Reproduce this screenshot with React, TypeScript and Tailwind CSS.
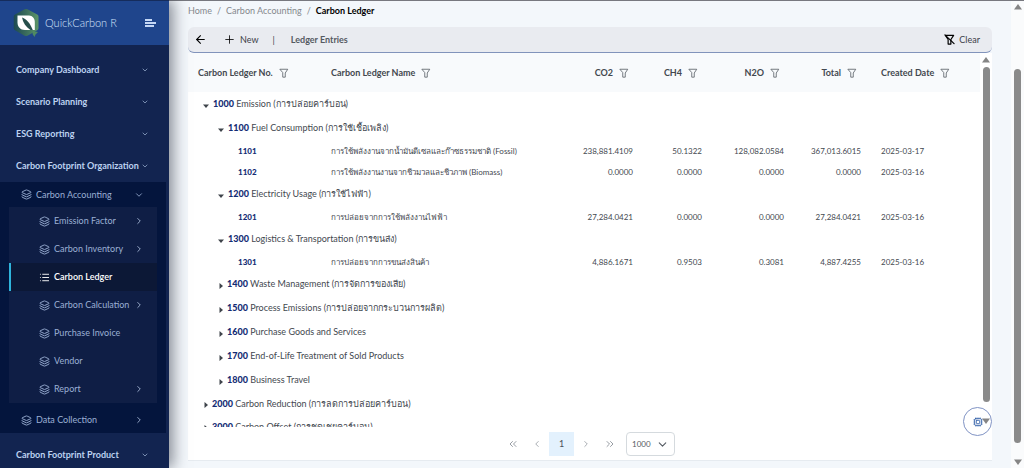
import { useState } from "react";
import { ChevronDown, ChevronRight, Cpu, Layers, List, Plus, ArrowLeft, ChevronLeft, ChevronsLeft, ChevronsRight } from "lucide-react";

type SubItem = { label: string; arrow?: boolean; active?: boolean };

const topItems = ["Company Dashboard", "Scenario Planning", "ESG Reporting", "Carbon Footprint Organization"];

const subItems: SubItem[] = [
  { label: "Emission Factor", arrow: true },
  { label: "Carbon Inventory", arrow: true },
  { label: "Carbon Ledger", active: true },
  { label: "Carbon Calculation", arrow: true },
  { label: "Purchase Invoice" },
  { label: "Vendor" },
  { label: "Report", arrow: true },
];

type Row = {
  no: string;
  level: number;
  name: string;
  open?: boolean;
  values?: string[];
};

const rows: Row[] = [
  { no: "1000", level: 0, name: "Emission (การปล่อยคาร์บอน)", open: true },
  { no: "1100", level: 1, name: "Fuel Consumption (การใช้เชื้อเพลิง)", open: true },
  {
    no: "1101",
    level: 2,
    name: "การใช้พลังงานจากน้ำมันดีเซลและก๊าซธรรมชาติ (Fossil)",
    values: ["238,881.4109", "50.1322", "128,082.0584", "367,013.6015", "2025-03-17"],
  },
  {
    no: "1102",
    level: 2,
    name: "การใช้พลังงานงานจากชีวมวลและชีวภาพ (Biomass)",
    values: ["0.0000", "0.0000", "0.0000", "0.0000", "2025-03-16"],
  },
  { no: "1200", level: 1, name: "Electricity Usage (การใช้ไฟฟ้า)", open: true },
  {
    no: "1201",
    level: 2,
    name: "การปล่อยจากการใช้พลังงานไฟฟ้า",
    values: ["27,284.0421", "0.0000", "0.0000", "27,284.0421", "2025-03-16"],
  },
  { no: "1300", level: 1, name: "Logistics & Transportation (การขนส่ง)", open: true },
  {
    no: "1301",
    level: 2,
    name: "การปล่อยจากการขนส่งสินค้า",
    values: ["4,886.1671", "0.9503", "0.3081", "4,887.4255", "2025-03-16"],
  },
  { no: "1400", level: 1, name: "Waste Management (การจัดการของเสีย)" },
  { no: "1500", level: 1, name: "Process Emissions (การปล่อยจากกระบวนการผลิต)" },
  { no: "1600", level: 1, name: "Purchase Goods and Services" },
  { no: "1700", level: 1, name: "End-of-Life Treatment of Sold Products" },
  { no: "1800", level: 1, name: "Business Travel" },
  { no: "2000", level: 0, name: "Carbon Reduction (การลดการปล่อยคาร์บอน)" },
  { no: "3000", level: 0, name: "Carbon Offset (การชดเชยคาร์บอน)" },
];

const Logo = () => (
  <svg viewBox="0 0 28 30" className="h-[30px] w-7 shrink-0" aria-hidden="true">
    <defs>
      <linearGradient id="hex" x1="0" y1="0" x2="1" y2="0">
        <stop offset="0" stopColor="#1d4a52" />
        <stop offset="0.5" stopColor="#3a6c5c" />
        <stop offset="1" stopColor="#5d9668" />
      </linearGradient>
    </defs>
    <path
      d="M12.6 1.3a3 3 0 0 1 2.8 0l9.8 5.2a2.4 2.4 0 0 1 1.3 2.1v11.6a2.4 2.4 0 0 1-1.3 2.1l-9.8 5.4a3 3 0 0 1-2.8 0L3 22.3a2.4 2.4 0 0 1-1.3-2.1V8.6a2.4 2.4 0 0 1 1.3-2.1z"
      fill="url(#hex)"
    />
    <path d="M5.5 7.500h11.500c3.500 0 5.800 3 5.800 6.500v8h-10c-4.500 0-7.300-3.200-7.300-7.500z" fill="#fff" />
    <path d="M10 9.500c5 1.500 8 6 10.800 12.500h-2.300c-4.500-3-7.500-7-8.500-12.500z" fill="#264f4b" />
    <path d="M21 23l5 1-2.500 2.500-1 2.500-2-3z" fill="#4f8a62" />
  </svg>
);

const FilterIcon = ({ slash = false, className = "" }: { slash?: boolean; className?: string }) => (
  <svg
    viewBox="0 0 12 12"
    className={className}
    fill="none"
    stroke="currentColor"
    strokeWidth={slash ? 1.3 : 1}
    strokeLinejoin="round"
    strokeLinecap="round"
    aria-hidden="true"
  >
    <path d="M1.500 1.500h9L7.500 6v5h-3V6z" />
    {slash && <path d="M1 1l10 9.500" />}
  </svg>
);

const SidebarGroup = ({ label }: { label: string }) => (
  <button className="flex h-8 w-full items-center justify-between pl-4 pr-5 text-left font-bold text-[#bdd2f0]">
    {label}
    <ChevronDown className="size-2 text-[#a9bfe0]" />
  </button>
);

const Sidebar = () => (
  <aside className="relative z-10 flex w-[169px] shrink-0 flex-col bg-[#122450] text-[9px] shadow-[4px_0_14px_rgba(40,45,60,0.55)]">
    <div className="flex h-[45px] shrink-0 items-center border-t border-[#152c5c] bg-[#1f458c] pl-3 pr-3">
      <Logo />
      <span className="ml-[5px] text-[11px] font-light text-[#d5e3fa]">QuickCarbon R</span>
      <button className="ml-auto text-[#c5d8f6]" aria-label="Toggle menu">
        <svg viewBox="0 0 12 10" className="h-[10px] w-3" fill="currentColor">
          <rect x="0" y="1" width="7" height="2" />
          <rect x="0" y="4" width="11" height="2" />
          <rect x="0" y="7" width="9" height="2" />
        </svg>
      </button>
    </div>

    <nav className="pt-[9px]">
      {topItems.map((label) => (
        <SidebarGroup key={label} label={label} />
      ))}

      {/* Opened section */}
      <div className="mr-[3px] bg-[#04153d] text-[#9bb0d4]">
        <button className="flex h-[25px] w-full items-center pl-[21px] pr-[22px]">
          <Layers className="mr-1 size-[11px]" />
          Carbon Accounting
          <ChevronDown className="ml-auto size-[10px]" />
        </button>

        <ul className="ml-[9px] mr-[9px] bg-[#0f1e45]">
          {subItems.map((item) => (
            <li key={item.label}>
              <a
                href="#"
                className={
                  item.active
                    ? "flex h-7 items-center border-l-2 border-[#2fb4dc] bg-[#0c1836] pl-7 pr-3 font-semibold text-white"
                    : "flex h-7 items-center pl-[30px] pr-[13px]"
                }
              >
                {item.active ? (
                  <List className="mr-1 size-[11px]" />
                ) : (
                  <Layers className="mr-1 size-[11px]" />
                )}
                {item.label}
                {item.arrow && <ChevronRight className="ml-auto size-[10px] text-[#b1c2e0]" />}
              </a>
            </li>
          ))}
        </ul>

        <button className="mt-1 flex h-[26px] w-full items-center pl-[21px] pr-[22px]">
          <Layers className="mr-1 size-[11px]" />
          Data Collection
          <ChevronRight className="ml-auto size-[10px] text-[#b1c2e0]" />
        </button>
      </div>

      <div className="pt-[6px]">
        <SidebarGroup label="Carbon Footprint Product" />
      </div>
    </nav>
  </aside>
);

const Triangle = ({ down = false }: { down?: boolean }) => (
  <svg viewBox="0 0 8 6" className="h-[6px] w-2 shrink-0" fill="#858585" aria-hidden="true">
    <path d={down ? "M0 0.500h8L4 6z" : "M0 5.500h8L4 0z"} />
  </svg>
);

const HeadCell = ({ label, right = false }: { label: string; right?: boolean }) => (
  <th scope="col" className={right ? "pl-0 pr-[14px]" : "pl-[10px]"}>
    <span className={right ? "flex items-center justify-end gap-[6px]" : "flex items-center gap-[6px]"}>
      {label}
      <button aria-label={`Filter ${label}`}>
        <FilterIcon className="size-[10px] text-[#5b6169]" />
      </button>
    </span>
  </th>
);

const Caret = ({ open }: { open?: boolean }) => (
  <svg viewBox="0 0 6 6" className="mt-[3px] size-[6px] shrink-0" fill="#3f444b" aria-hidden="true">
    <path d={open ? "M0 1.500h6L3 5z" : "M1.500 0L5 3 1.500 6z"} />
  </svg>
);

const GroupRow = ({ row }: { row: Row }) => (
  <tr className={row.level === 0 && !row.open ? "h-[23px]" : "h-6"}>
    <td colSpan={7} className={row.level === 0 ? "pl-[15px]" : "pl-[30px]"}>
      <button className={row.open ? "flex items-center gap-1" : "flex items-center gap-[3px]"}>
        <Caret open={row.open} />
        <span className="whitespace-nowrap">
          <b className="font-black text-[#142c74]">{row.no}</b> {row.name}
        </span>
      </button>
    </td>
  </tr>
);

const LeafRow = ({ row }: { row: Row }) => (
  <tr className="h-[21px] text-[8px]">
    <td className="pl-[50px] font-black text-[#142c74]">{row.no}</td>
    <td className="whitespace-nowrap pl-[10px]">{row.name}</td>
    {row.values?.map((value, i) => (
      <td key={i} className={i < 4 ? "pr-[10px] text-right" : "pl-[10px]"}>
        {value}
      </td>
    ))}
  </tr>
);

const LedgerTable = () => (
  <div className="flex min-h-0 flex-1">
    <div className="min-w-0 flex-1 overflow-hidden">
      <table className="w-full table-fixed border-collapse text-[9px] leading-3 text-[#43484f]">
        <colgroup>
          <col className="w-[133px]" />
          <col />
          <col className="w-[80px]" />
          <col className="w-[69px]" />
          <col className="w-[82px]" />
          <col className="w-[77px]" />
          <col className="w-[109px]" />
        </colgroup>
        <thead>
          <tr className="h-[39px] bg-[#f8fafc] text-left">
            <HeadCell label="Carbon Ledger No." />
            <HeadCell label="Carbon Ledger Name" />
            <HeadCell label="CO2" right />
            <HeadCell label="CH4" right />
            <HeadCell label="N2O" right />
            <HeadCell label="Total" right />
            <HeadCell label="Created Date" />
          </tr>
        </thead>
        <tbody>
          {rows.map((row) => (row.values ? <LeafRow key={row.no} row={row} /> : <GroupRow key={row.no} row={row} />))}
        </tbody>
      </table>
    </div>

    {/* Table scrollbar */}
    <div className="flex w-3 shrink-0 flex-col items-center pb-[3px] pt-1">
      <Triangle />
      <div className="mb-4 mt-1 w-[7px] flex-1 rounded-full bg-[#8a8a8a]" />
      <Triangle down />
    </div>
  </div>
);

const Paginator = () => {
  const [size, setSize] = useState("1000");

  return (
    <div className="flex h-[33px] shrink-0 items-center justify-center pr-1 text-[9px] text-[#555b63]">
      <button className="flex size-6 items-center justify-center text-[#989da4]" aria-label="First page">
        <ChevronsLeft className="size-3" />
      </button>
      <button className="flex size-6 items-center justify-center text-[#989da4]" aria-label="Previous page">
        <ChevronLeft className="size-[10px]" />
      </button>
      <button className="h-6 w-[25px] bg-[#e3f1fd] text-[#495057]" aria-current="page">
        1
      </button>
      <button className="flex size-6 items-center justify-center text-[#989da4]" aria-label="Next page">
        <ChevronRight className="size-[10px]" />
      </button>
      <button className="flex size-6 items-center justify-center text-[#989da4]" aria-label="Last page">
        <ChevronsRight className="size-3" />
      </button>
      <div className="relative ml-1">
        <select
          value={size}
          onChange={(e) => setSize(e.target.value)}
          aria-label="Rows per page"
          className="h-6 w-[49px] appearance-none rounded-sm border border-[#d5dade] bg-white pl-[5px] text-[8px]"
        >
          <option>100</option>
          <option>500</option>
          <option>1000</option>
        </select>
        <ChevronDown className="pointer-events-none absolute right-[6px] top-[6px] size-[13px]" />
      </div>
    </div>
  );
};

export default function App() {
  return (
    <div className="flex h-screen overflow-hidden bg-[#f3f7fb] font-['Lato','Noto_Sans',sans-serif]">
      <Sidebar />

      <main className="flex min-w-0 flex-1 flex-col border-t border-[#77787f] pb-[7px] pl-[19px] pr-[19px]">
        <nav aria-label="Breadcrumb" className="flex h-[26px] shrink-0 items-center gap-[5px] pb-[6px] text-[9px] text-[#85888d]">
          <a href="#">Home</a>
          <span>/</span>
          <a href="#">Carbon Accounting</a>
          <span>/</span>
          <span className="font-bold text-black">Carbon Ledger</span>
        </nav>

        <div className="flex h-[26px] shrink-0 items-center rounded-md border-b border-[#8193bb] bg-[#e9ebf0] pl-[6px] pr-3 text-[9px] text-[#3c4148]">
          <button className="text-black" aria-label="Back">
            <ArrowLeft className="size-[13px]" />
          </button>
          <button className="ml-4 flex items-center gap-1">
            <Plus className="size-[13px] text-black" strokeWidth={1.5} />
            New
          </button>
          <span className="ml-[14px]">|</span>
          <span className="ml-4 font-bold text-[#555a62]">Ledger Entries</span>
          <button className="ml-auto flex items-center gap-1">
            <FilterIcon slash className="size-[11px] text-black" />
            Clear
          </button>
        </div>

        <section className="relative flex min-h-0 flex-1 flex-col border-b border-[#e6ebf0] bg-white">
          <LedgerTable />
          <Paginator />
          {/* Floating assistant button */}
          <button
            className="absolute bottom-6 right-0 flex size-[29px] items-center justify-center rounded-full border border-[#8093c4] text-[#3461a8]"
            aria-label="Assistant"
          >
            <Cpu className="size-[10px]" />
          </button>
        </section>
      </main>

      {/* Page scrollbar */}
      <div className="flex w-[13px] shrink-0 flex-col items-center border-t border-[#77787f] bg-[#fafbfc] pb-[3px] pt-[3px]">
        <Triangle />
        <div className="mb-4 mt-[59px] w-[7px] flex-1 rounded-full bg-[#8a8a8a]" />
        <Triangle down />
      </div>
    </div>
  );
}
